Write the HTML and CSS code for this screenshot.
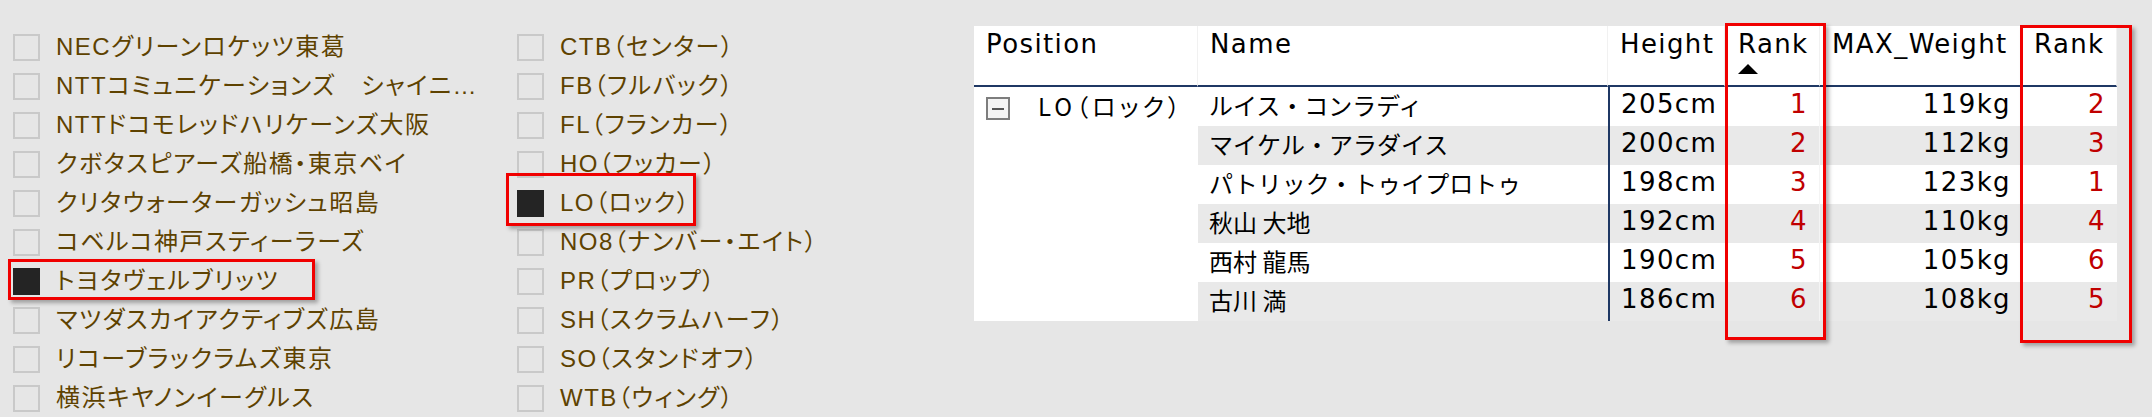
FILE: index.html
```html
<!DOCTYPE html>
<html lang="ja">
<head>
<meta charset="utf-8">
<title>Rugby players</title>
<link rel="stylesheet" href="styles.css">
</head>
<body>
<div class="page">
  <div class="filters">
    <div class="fcol fcol-teams">
      <div class="fitem"><span class="box"></span><span class="label">NECグリーンロケッツ東葛</span></div>
      <div class="fitem"><span class="box"></span><span class="label">NTTコミュニケーションズ　シャイニ…</span></div>
      <div class="fitem"><span class="box"></span><span class="label">NTTドコモレッドハリケーンズ大阪</span></div>
      <div class="fitem"><span class="box"></span><span class="label">クボタスピアーズ船橋・東京ベイ</span></div>
      <div class="fitem"><span class="box"></span><span class="label">クリタウォーターガッシュ昭島</span></div>
      <div class="fitem"><span class="box"></span><span class="label">コベルコ神戸スティーラーズ</span></div>
      <div class="fitem"><span class="box on"></span><span class="label">トヨタヴェルブリッツ</span></div>
      <div class="fitem"><span class="box"></span><span class="label">マツダスカイアクティブズ広島</span></div>
      <div class="fitem"><span class="box"></span><span class="label">リコーブラックラムズ東京</span></div>
      <div class="fitem"><span class="box"></span><span class="label">横浜キヤノンイーグルス</span></div>
    </div>
    <div class="fcol">
      <div class="fitem"><span class="box"></span><span class="label">CTB（センター）</span></div>
      <div class="fitem"><span class="box"></span><span class="label">FB（フルバック）</span></div>
      <div class="fitem"><span class="box"></span><span class="label">FL（フランカー）</span></div>
      <div class="fitem"><span class="box"></span><span class="label">HO（フッカー）</span></div>
      <div class="fitem"><span class="box on"></span><span class="label">LO（ロック）</span></div>
      <div class="fitem"><span class="box"></span><span class="label">NO8（ナンバー・エイト）</span></div>
      <div class="fitem"><span class="box"></span><span class="label">PR（プロップ）</span></div>
      <div class="fitem"><span class="box"></span><span class="label">SH（スクラムハーフ）</span></div>
      <div class="fitem"><span class="box"></span><span class="label">SO（スタンドオフ）</span></div>
      <div class="fitem"><span class="box"></span><span class="label">WTB（ウィング）</span></div>
    </div>
  </div>

  <div class="table">
    <div class="th">Position</div>
    <div class="th">Name</div>
    <div class="th">Height</div>
    <div class="th th-sort">Rank<span class="tri"></span></div>
    <div class="th">MAX_Weight</div>
    <div class="th">Rank</div>

    <div class="pos"><span class="expander"><span class="minus"></span></span><span class="jp">LO（ロック）</span></div>

    <div class="td name jp">ルイス・コンラディ</div>
    <div class="td num hgt">205cm</div>
    <div class="td num rank r1">1</div>
    <div class="td num">119kg</div>
    <div class="td num rank">2</div>

    <div class="td name jp alt">マイケル・アラダイス</div>
    <div class="td num hgt alt">200cm</div>
    <div class="td num rank r1 alt">2</div>
    <div class="td num alt">112kg</div>
    <div class="td num rank alt">3</div>

    <div class="td name jp">パトリック・トゥイプロトゥ</div>
    <div class="td num hgt">198cm</div>
    <div class="td num rank r1">3</div>
    <div class="td num">123kg</div>
    <div class="td num rank">1</div>

    <div class="td name jp alt">秋山 大地</div>
    <div class="td num hgt alt">192cm</div>
    <div class="td num rank r1 alt">4</div>
    <div class="td num alt">110kg</div>
    <div class="td num rank alt">4</div>

    <div class="td name jp">西村 龍馬</div>
    <div class="td num hgt">190cm</div>
    <div class="td num rank r1">5</div>
    <div class="td num">105kg</div>
    <div class="td num rank">6</div>

    <div class="td name jp alt">古川 満</div>
    <div class="td num hgt alt">186cm</div>
    <div class="td num rank r1 alt">6</div>
    <div class="td num alt">108kg</div>
    <div class="td num rank alt">5</div>
  </div>

  <div class="mark mark-team"></div>
  <div class="mark mark-pos"></div>
  <div class="mark mark-rank1"></div>
  <div class="mark mark-rank2"></div>
</div>
</body>
</html>
```
FILE: styles.css
```css
html, body {
  margin: 0;
  padding: 0;
  background: #e6e6e6;
}

.page {
  position: relative;
  display: flex;
  align-items: flex-start;
  width: 2152px;
  height: 417px;
  overflow: hidden;
}

/* ---------- filter lists ---------- */
.filters {
  display: flex;
  width: 961px;
  padding: 28px 0 0 13px;
}

.fcol-teams {
  width: 504px;
}

.fitem {
  display: flex;
  align-items: center;
  gap: 16px;
  height: 39px;
  font-family: "Liberation Sans", "Noto Sans CJK JP", sans-serif;
  font-size: 24px;
  color: #5e4200;
  white-space: nowrap;
}

.box {
  flex: none;
  box-sizing: border-box;
  width: 27px;
  height: 27px;
  border: 2px solid #c9c9c9;
}

.box.on {
  background: #242424;
  border-color: #242424;
}

.label {
  line-height: 30px;
  padding-bottom: 2px;
  font-feature-settings: "palt";
  letter-spacing: 1.5px;
}

/* ---------- table ---------- */
.table {
  margin-top: 26px;
  display: grid;
  grid-template-columns: 224px 410px 117px 95px 202px 95px;
  grid-template-rows: 61px repeat(6, 39px);
  background: #ffffff;
  font-family: "DejaVu Sans", "Noto Sans CJK JP", sans-serif;
  font-size: 26px;
  letter-spacing: 1.4px;
  color: #000000;
}

.th {
  box-sizing: border-box;
  height: 61px;
  padding: 3px 10px 0 12px;
  line-height: 30px;
  border-bottom: 2px solid #1f3864;
  border-right: 1px solid #f1f1f1;
  white-space: nowrap;
}

.th:last-child { border-right: 0; }

.th-sort {
  display: flex;
  flex-direction: column;
  padding-left: 13px;
}

.tri {
  width: 0;
  height: 0;
  margin-top: 5px;
  border-left: 10px solid transparent;
  border-right: 10px solid transparent;
  border-bottom: 10px solid #000;
}

.pos {
  grid-row: 2 / span 6;
  display: flex;
  align-items: flex-start;
  gap: 28px;
  padding: 10px 0 0 12px;
  background: #ffffff;
}

.expander {
  box-sizing: border-box;
  width: 24px;
  height: 23px;
  border: 2px solid #7d7d7d;
  background: #f4f4f4;
  display: flex;
  align-items: center;
  justify-content: center;
}

.minus {
  width: 12px;
  height: 2px;
  background: #555;
}

.pos .jp {
  line-height: 26px;
  margin-top: -4px;
  font-feature-settings: "palt";
  letter-spacing: 4px;
}

.td {
  box-sizing: border-box;
  height: 39px;
  line-height: 34px;
  padding: 0 11px 5px 11px;
  white-space: nowrap;
}

.jp {
  font-family: "Noto Sans CJK JP", sans-serif;
  font-size: 24px;
  letter-spacing: 0;
}

.name {
  padding-left: 11px;
  line-height: 36px;
  padding-bottom: 3px;
}

.num {
  text-align: right;
}

.hgt {
  border-left: 2px solid #1f3864;
}

.rank {
  color: #c00000;
}

.r1 {
  border-right: 1px solid #f4f4f4;
}

.alt {
  background: #e9e9e9;
}

/* ---------- highlight annotations ---------- */
.mark {
  position: absolute;
  box-sizing: border-box;
  border: 3px solid #f00000;
  box-shadow: 3px 3px 4px rgba(0, 0, 0, 0.3);
}

.mark-team  { left: 8px;    top: 259px; width: 307px; height: 41px; }
.mark-pos   { left: 506px;  top: 173px; width: 190px; height: 53px; }
.mark-rank1 { left: 1725px; top: 23px;  width: 101px; height: 317px; }
.mark-rank2 { left: 2020px; top: 25px;  width: 112px; height: 318px; }
```
